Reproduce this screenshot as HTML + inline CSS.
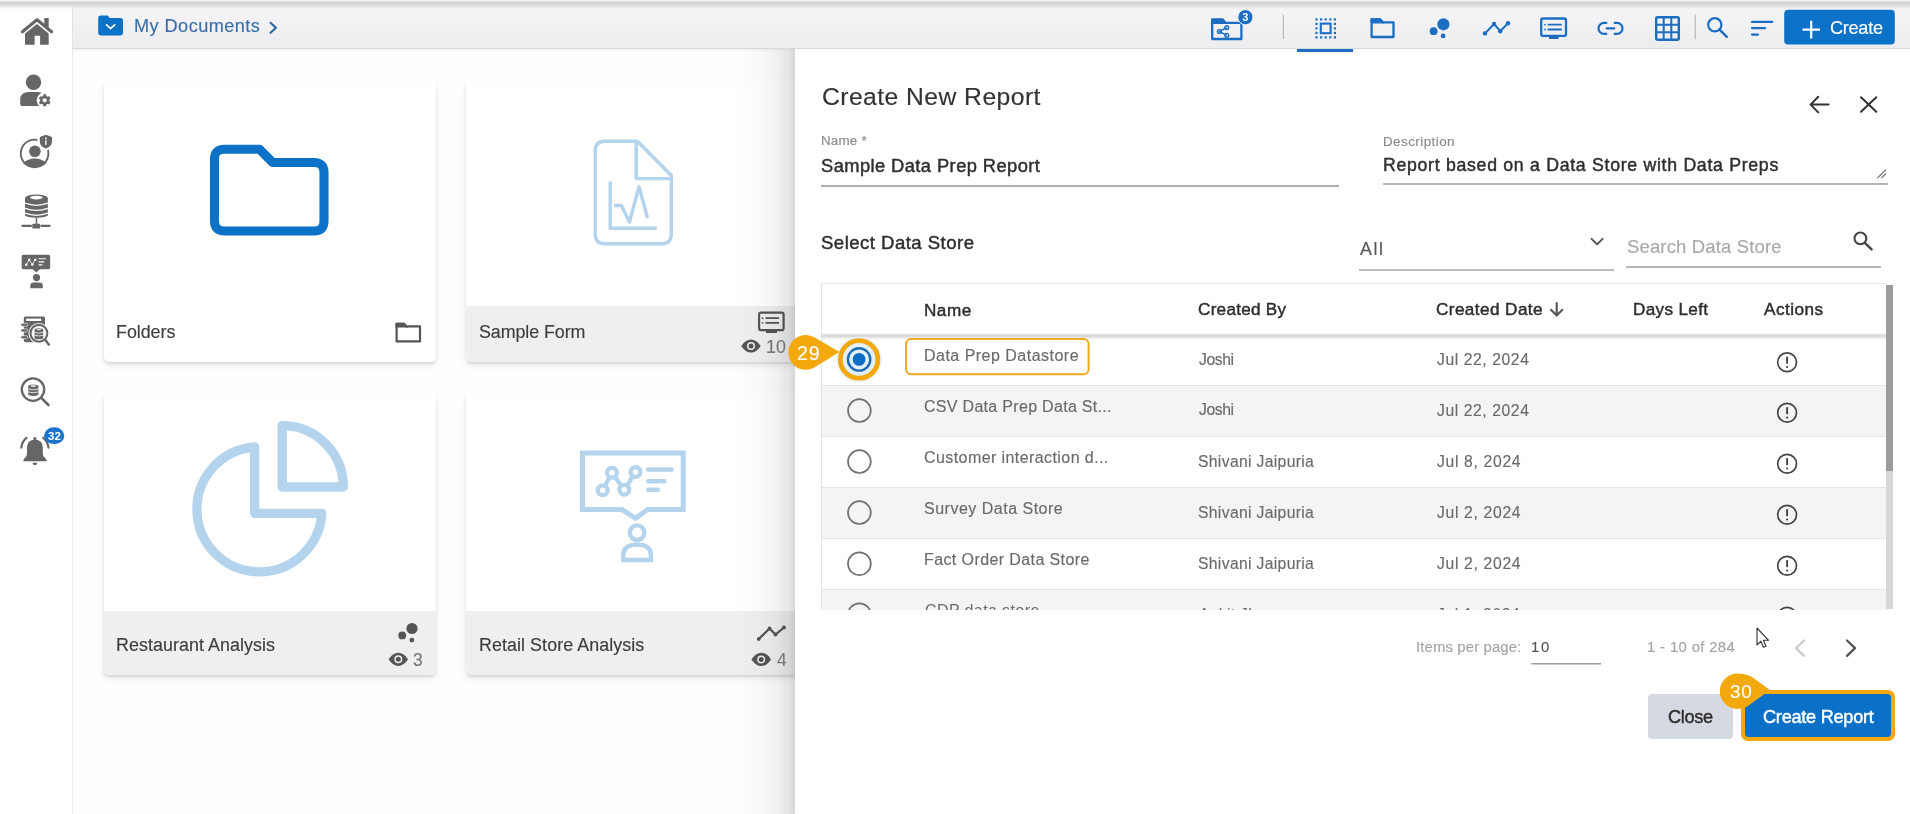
<!DOCTYPE html>
<html><head><meta charset="utf-8"><style>
html,body{margin:0;padding:0;}
body{width:1910px;height:814px;overflow:hidden;position:relative;background:#fefefe;font-family:"Liberation Sans",sans-serif;}
.a{position:absolute;}
.t{position:absolute;white-space:nowrap;line-height:1;font-family:"Liberation Sans",sans-serif;will-change:transform;}
svg{position:absolute;left:0;top:0;overflow:visible;}
.card{position:absolute;background:#fff;border-radius:5px;box-shadow:0 2px 3px rgba(0,0,0,0.11),0 4px 9px rgba(0,0,0,0.07);overflow:hidden;}
.foot{position:absolute;left:0;right:0;bottom:0;background:#efeff1;}
</style></head><body>
<!-- sidebar -->
<div class="a" style="left:0;top:0;width:72px;height:814px;background:#fff;border-right:1px solid #e9e9ea;"></div>
<!-- header -->
<div class="a" style="left:73px;top:0;width:1837px;height:48px;background:linear-gradient(#f4f4f6 25%,#ededef 100%);border-bottom:1px solid #d9d9db;box-shadow:0 1px 3px rgba(0,0,0,0.07);"></div>
<div class="a" style="left:0;top:0;width:1910px;height:9px;background:linear-gradient(#fdfdfd 0px,#cdcdcf 2.8px,#dcdcde 5px,rgba(243,243,245,0) 9px);"></div>
<!-- cards -->
<div class="card" style="left:104px;top:81px;width:332px;height:281px;"></div>
<div class="card" style="left:466px;top:81px;width:332px;height:281px;"><div class="foot" style="height:56px;"></div></div>
<div class="card" style="left:104px;top:393px;width:332px;height:282px;"><div class="foot" style="height:64px;"></div></div>
<div class="card" style="left:466px;top:393px;width:332px;height:282px;"><div class="foot" style="height:64px;"></div></div>
<!-- left svg -->
<svg width="1910" height="814" viewBox="0 0 1910 814">
 <g fill="#666" stroke="none">
  <!-- home -->
  <polyline points="22.4,31.8 37,19.8 51.6,31.8" fill="none" stroke="#666" stroke-width="3.2" stroke-linecap="round" stroke-linejoin="round"/>
  <rect x="44.3" y="18" width="4.4" height="9"/>
  <polygon points="25,33.6 37,23.9 48.7,33.6 48.7,44.7 40.1,44.7 40.1,35.8 34.6,35.8 34.6,44.7 25,44.7"/>
  <!-- user gear -->
  <circle cx="33.5" cy="82.2" r="7.7"/>
  <path d="M20.2 104 L20.2 100 Q20.2 92 29 92 L37 92 Q40 92 42 93 L42 106 L22.2 106 Q20.2 106 20.2 104Z"/>
  <circle cx="44.7" cy="100.3" r="8" fill="#fff"/>
  <g transform="translate(44.7 100.3)">
   <circle r="4.6"/>
   <rect x="-1.5" y="-6" width="3" height="12" rx="0.6"/>
   <rect x="-1.5" y="-6" width="3" height="12" rx="0.6" transform="rotate(60)"/>
   <rect x="-1.5" y="-6" width="3" height="12" rx="0.6" transform="rotate(120)"/>
   <circle r="2.1" fill="#fff"/>
  </g>
  <!-- user circle shield -->
  <circle cx="34.6" cy="153.4" r="13.8" fill="none" stroke="#666" stroke-width="1.9"/>
  <circle cx="34.9" cy="151.3" r="5.8"/>
  <path d="M23.2 163.2 Q28 158.6 34.9 158.6 Q41.8 158.6 46.4 163.2 Q42 167.2 34.9 167.2 Q27.6 167.2 23.2 163.2Z"/>
  <path d="M45.9 132.2 L54.3 135.3 L54.3 141 Q54.3 148 45.9 150.8 Q37.5 148 37.5 141 L37.5 135.3Z" fill="#fff"/>
  <path d="M45.9 134.7 L52 137 L52 141 Q52 146.5 45.9 148.5 Q39.8 146.5 39.8 141 L39.8 137Z"/>
  <circle cx="45.9" cy="138.4" r="0.95" fill="#fff"/>
  <rect x="45.2" y="140.3" width="1.4" height="4.6" fill="#fff"/>
  <!-- database network -->
  <rect x="25" y="198" width="22.8" height="17.5"/>
  <ellipse cx="36.4" cy="198" rx="11.4" ry="3.6"/>
  <ellipse cx="36.4" cy="215" rx="11.4" ry="2.8"/>
  <ellipse cx="36.4" cy="197.6" rx="6.3" ry="1.8" fill="#fff"/>
  <path d="M25 203.2 Q36.4 207.4 47.8 203.2 M25 208.3 Q36.4 212.5 47.8 208.3 M25 213.2 Q36.4 217.4 47.8 213.2" fill="none" stroke="#fff" stroke-width="1.3"/>
  <rect x="35.7" y="217.6" width="1.5" height="6.5"/>
  <rect x="32.3" y="223.8" width="7.9" height="4.7" rx="0.8"/>
  <line x1="22.4" y1="225.9" x2="31" y2="225.9" stroke="#666" stroke-width="2.2" stroke-linecap="round"/>
  <line x1="41.5" y1="225.9" x2="49.6" y2="225.9" stroke="#666" stroke-width="2.2" stroke-linecap="round"/>
  <!-- board person -->
  <rect x="21.7" y="254.8" width="28.5" height="14.4" rx="1.6"/>
  <polygon points="32.6,269 36.3,272.4 40,269"/>
  <g fill="#fff" stroke="none">
   <circle cx="26.3" cy="264.8" r="1.2"/><circle cx="29.2" cy="259.8" r="1.2"/><circle cx="32.3" cy="264.5" r="1.2"/><circle cx="35.3" cy="259.7" r="1.2"/>
  </g>
  <polyline points="26.3,264.8 29.2,259.8 32.3,264.5 35.3,259.7" fill="none" stroke="#fff" stroke-width="0.8"/>
  <path d="M38.6 258.8 H46 M38.6 261.9 H44.2 M38.6 264.9 H42.4" stroke="#fff" stroke-width="1.1" fill="none"/>
  <circle cx="36.5" cy="277.6" r="3.6"/>
  <path d="M30.3 288.2 L30.3 285.5 Q30.3 282.4 34 282.4 L39.2 282.4 Q42.8 282.4 42.8 285.5 L42.8 288.2Z"/>
  <!-- notebook magnifier -->
  <rect x="23.8" y="316.4" width="21.2" height="25.8" rx="1.6"/>
  <rect x="26.2" y="318.6" width="15" height="2.4" fill="#fff"/>
  <g fill="#666" stroke="#fff" stroke-width="0.6">
   <rect x="20.8" y="323.3" width="7" height="3" rx="1.5"/>
   <rect x="20.8" y="328.9" width="7" height="3" rx="1.5"/>
   <rect x="20.8" y="335.7" width="7" height="3" rx="1.5"/>
  </g>
  <circle cx="38.9" cy="333.3" r="10.4" fill="#fff"/>
  <line x1="45" y1="339.6" x2="48.7" y2="344.6" stroke="#fff" stroke-width="4.6" stroke-linecap="round"/>
  <circle cx="38.9" cy="333.3" r="8.4" fill="#fff" stroke="#666" stroke-width="2.1"/>
  <line x1="45" y1="339.6" x2="48.7" y2="344.6" stroke="#666" stroke-width="2.5" stroke-linecap="round"/>
  <rect x="34.6" y="329.8" width="8.6" height="8.2"/>
  <ellipse cx="38.9" cy="329.8" rx="4.3" ry="1.5"/>
  <ellipse cx="38.9" cy="338" rx="4.3" ry="1.3"/>
  <path d="M34.6 332.4 Q38.9 334 43.2 332.4 M34.6 335.2 Q38.9 336.8 43.2 335.2" fill="none" stroke="#fff" stroke-width="0.8"/>
  <ellipse cx="38.9" cy="329.6" rx="2.3" ry="0.7" fill="#fff"/>
  <!-- magnifier db -->
  <circle cx="33" cy="389.6" r="11.2" fill="none" stroke="#666" stroke-width="2.3"/>
  <line x1="41.3" y1="397.9" x2="48.4" y2="405" stroke="#666" stroke-width="2.6" stroke-linecap="round"/>
  <rect x="28.2" y="386.2" width="10.2" height="8.4"/>
  <ellipse cx="33.3" cy="386.2" rx="5.1" ry="1.6"/>
  <ellipse cx="33.3" cy="394.6" rx="5.1" ry="1.4"/>
  <path d="M28.2 389 Q33.3 390.7 38.4 389 M28.2 391.9 Q33.3 393.6 38.4 391.9" fill="none" stroke="#fff" stroke-width="0.8"/>
  <ellipse cx="33.3" cy="386" rx="3" ry="0.8" fill="#fff"/>
  <!-- bell -->
  <circle cx="34.9" cy="438.6" r="1.6"/>
  <path d="M23.2 461.3 Q23.2 459 26.2 456.5 Q27 455.5 27 453 L27 447.5 Q27 440 34.9 439.5 Q42.8 440 42.8 447.5 L42.8 453 Q42.8 455.5 43.7 456.5 Q46.8 459 46.8 461.3Z"/>
  <path d="M32.5 462.8 A2.4 2.4 0 0 0 37.3 462.8Z"/>
  <path d="M26.5 437.8 Q22 441.5 21.3 447.6" fill="none" stroke="#666" stroke-width="2.2" stroke-linecap="round"/>
  <path d="M43.3 437.8 Q47.8 441.5 48.5 447.6" fill="none" stroke="#666" stroke-width="2.2" stroke-linecap="round"/>
  <ellipse cx="54.2" cy="435.7" rx="10.1" ry="8.4" fill="#1a74c9"/>
 </g>
 <!-- card icons -->
 <path d="M214.5 159 Q214.5 149.2 224.3 149.2 L259.5 149.2 L272.7 162.5 L314 162.5 Q324 162.5 324 172.5 L324 221 Q324 231 314 231 L224.5 231 Q214.5 231 214.5 221 Z" fill="none" stroke="#0b72c8" stroke-width="9.1" stroke-linejoin="round"/>
 <g fill="none" stroke="#b4d3ec" stroke-width="3.4" stroke-linejoin="round">
  <path d="M605 141.2 L637.5 141.2 L671.3 175.5 L671.3 234 Q671.3 243.8 661.5 243.8 L605 243.8 Q595.2 243.8 595.2 234 L595.2 151 Q595.2 141.2 605 141.2 Z"/>
  <path d="M636.2 141.2 L636.2 178.6 L671.3 178.6"/>
  <polyline points="610.2,181.5 610.2,228.2 656.8,228.2"/>
  <polyline points="614,205.5 621.4,205.5 629.5,222 639,186.5 647.5,218"/>
 </g>
 <g fill="none" stroke="#b4d3ec" stroke-width="9.3" stroke-linejoin="round">
  <path d="M254.7 447 L254.7 513.4 L321.8 513.4 A62.5 62.5 0 1 1 254.7 447 Z"/>
  <path d="M282.2 425.6 L282.2 487 L343.3 487 A61.2 61.2 0 0 0 282.2 425.6 Z"/>
 </g>
 <g fill="none" stroke="#b4d3ec" stroke-width="5" stroke-linejoin="miter">
  <path d="M582.5 453 L683.2 453 L683.2 509.6 L647.5 509.6 L635.5 518.3 L622 509.6 L582.5 509.6 Z"/>
  <polyline points="602.7,490.3 611.9,472.7 624.3,489.8 635.5,472" stroke-width="4.3"/>
  <g fill="#fff" stroke-width="4.3">
   <circle cx="611.9" cy="472.7" r="4.9"/><circle cx="602.7" cy="490.3" r="4.9"/><circle cx="624.3" cy="489.8" r="4.9"/><circle cx="635.5" cy="472" r="4.9"/>
  </g>
  <path d="M648.2 469.6 H671.6 M648.2 481.2 H664.3 M648.2 489.8 H657.8" stroke-width="4.5" stroke-linecap="round"/>
  <circle cx="637.1" cy="532.7" r="7.3" stroke-width="4.4"/>
  <path d="M623.3 560 L623.3 555 Q623.3 544.6 637.1 544.6 Q650.9 544.6 650.9 555 L650.9 560 Z" stroke-width="4.4"/>
 </g>
 <!-- card footer icons -->
 <g fill="none" stroke="#555" stroke-width="2.2">
  <path d="M396.6 341.4 L396.6 323.8 L404 323.8 L406.2 326.4 L420 326.4 L420 341.4 Z" stroke-linejoin="round"/>
  <path d="M396.6 323.8 L404 323.8 L406.2 326.4 L396.6 326.4Z" fill="#555"/>
  <rect x="759.1" y="312.7" width="24.5" height="17.5" rx="2"/>
  <path d="M765.5 318.2 H779 M765.5 322.8 H779" stroke-width="1.8"/>
  <polyline points="758.8,639 769.5,628.5 775.5,634.5 784,627.5" stroke-width="2.2"/>
 </g>
 <g fill="#555">
  <rect x="766" y="330.2" width="11" height="2.8"/>
  <circle cx="762.6" cy="318.2" r="0.9"/><circle cx="762.6" cy="322.8" r="0.9"/>
  <circle cx="758.8" cy="639" r="1.9"/><circle cx="769.5" cy="628.5" r="1.9"/><circle cx="775.5" cy="634.5" r="1.9"/><circle cx="784" cy="627.5" r="1.9"/>
  <circle cx="412" cy="628.5" r="5.6"/><circle cx="402.2" cy="635.4" r="3.9"/><circle cx="411.9" cy="640.1" r="2.4"/>
 </g>
 <g id="eye" fill="#555">
  <path d="M741.2 346 Q745.5 339.4 751 339.4 Q756.5 339.4 760.8 346 Q756.5 352.6 751 352.6 Q745.5 352.6 741.2 346Z"/>
  <circle cx="751" cy="346" r="4" fill="#efeff1"/>
  <circle cx="751" cy="346" r="2.5"/>
 </g>
 <use href="#eye" transform="translate(-352.7 313.3)"/>
 <use href="#eye" transform="translate(10.2 313.4)"/>
</svg>
<!-- panel -->
<div class="a" style="left:735px;top:49px;width:60px;height:765px;background:linear-gradient(to right,rgba(0,0,0,0) 0px,rgba(0,0,0,0.02) 25px,rgba(0,0,0,0.05) 42px,rgba(0,0,0,0.10) 54px,rgba(0,0,0,0.16) 60px);"></div>
<div class="a" style="left:795px;top:49px;width:1115px;height:765px;background:#fff;"></div>
<!-- panel inputs underline -->
<div class="a" style="left:821px;top:185px;width:518px;height:1.6px;background:#aeaeae;"></div>
<div class="a" style="left:1383px;top:183px;width:505px;height:1.6px;background:#b3b6bd;"></div>
<div class="a" style="left:1359px;top:269px;width:255px;height:1.6px;background:#b9bcc2;"></div>
<div class="a" style="left:1626px;top:266px;width:255px;height:1.6px;background:#b6b6b6;"></div>
<!-- table -->
<div class="a" style="left:821px;top:283px;width:1065px;height:326px;overflow:hidden;border-left:1px solid #e3e3e3;border-top:1px solid #ececec;background:#fff;">
 <div class="a" style="left:0;top:51px;width:1065px;height:51px;background:#fff;border-bottom:1px solid #e5e5e6;box-sizing:border-box;"></div>
 <div class="a" style="left:0;top:102px;width:1065px;height:51px;background:#f4f4f6;border-bottom:1px solid #e5e5e6;box-sizing:border-box;"></div>
 <div class="a" style="left:0;top:153px;width:1065px;height:51px;background:#fff;border-bottom:1px solid #e5e5e6;box-sizing:border-box;"></div>
 <div class="a" style="left:0;top:204px;width:1065px;height:51px;background:#f4f4f6;border-bottom:1px solid #e5e5e6;box-sizing:border-box;"></div>
 <div class="a" style="left:0;top:255px;width:1065px;height:51px;background:#fff;border-bottom:1px solid #e5e5e6;box-sizing:border-box;"></div>
 <div class="a" style="left:0;top:306px;width:1065px;height:51px;background:#f4f4f6;"></div>
 <div class="t" style="left:103px;top:319px;font-size:16px;letter-spacing:0.4px;color:#6a6a6a;">CDP data store</div>
 <div class="t" style="left:377px;top:323px;font-size:15.7px;letter-spacing:0.3px;color:#6a6a6a;">Ankit Jha</div>
 <div class="t" style="left:615px;top:323px;font-size:15.7px;letter-spacing:0.6px;color:#6a6a6a;">Jul 1, 2024</div>
 <svg width="1065" height="400" viewBox="822 284 1065 400" style="position:absolute;left:0;top:0;"><circle cx="859.4" cy="614.7" r="11.4" fill="none" stroke="#707070" stroke-width="1.7"/><circle cx="1787.1" cy="616.7" r="9.4" fill="none" stroke="#444" stroke-width="1.7"/></svg>
 <div class="a" style="left:0;top:0;width:1065px;height:50px;background:#fff;"></div>
 <div class="a" style="left:0;top:48.5px;width:1065px;height:7px;background:linear-gradient(rgba(0,0,0,0) 0px,rgba(0,0,0,0.10) 1.5px,rgba(0,0,0,0.165) 3px,rgba(0,0,0,0.09) 4.5px,rgba(0,0,0,0) 7px);"></div>
</div>
<div class="a" style="left:1886px;top:285px;width:7px;height:324px;background:#d6d6d6;"></div>
<div class="a" style="left:1886px;top:285px;width:7px;height:186px;background:#9c9c9c;"></div>
<!-- buttons -->
<div class="a" style="left:1648px;top:694px;width:85px;height:45px;background:#d5d9e2;border-radius:4px;"></div>
<div class="a" style="left:1741px;top:690px;width:154px;height:51px;background:#f3a90c;border-radius:7px;"></div>
<div class="a" style="left:1745px;top:694px;width:146px;height:42.5px;background:#0b70c8;border-radius:4px;"></div>
<!-- top svg -->
<svg width="1910" height="814" viewBox="0 0 1910 814">
 <!-- header breadcrumb -->
 <path d="M98.2 18 Q98.2 15.5 100.7 15.5 L107.5 15.5 L110 18 L120.5 18 Q123 18 123 20.5 L123 33 Q123 35.4 120.5 35.4 L100.7 35.4 Q98.2 35.4 98.2 33Z" fill="#0b72c8"/>
 <polyline points="106.5,24.8 110.6,28.6 114.7,24.8" fill="none" stroke="#fff" stroke-width="1.6" stroke-linecap="round" stroke-linejoin="round"/>
 <polyline points="270.5,22.8 276,27.8 270.5,32.8" fill="none" stroke="#2f66a8" stroke-width="2.1" stroke-linecap="round" stroke-linejoin="round"/>
 <g fill="none" stroke="#1b6ec2" stroke-width="2.3" stroke-linejoin="round">
  <path d="M1212.2 39 L1212.2 19.6 L1222.6 19.6 L1225.4 22.9 L1241.4 22.9 L1241.4 39 Z"/>
  <path d="M1212.2 19.6 L1222.6 19.6 L1225.4 22.9 L1212.2 22.9Z" fill="#1b6ec2"/>
  <path d="M1226.8 27.6 L1219.3 31.5 L1226.8 35.3" stroke-width="1.5"/>
  <circle cx="1219.3" cy="31.5" r="1.9" stroke-width="1.4"/>
  <circle cx="1226.8" cy="27.6" r="1.9" stroke-width="1.4"/>
  <circle cx="1226.8" cy="35.3" r="1.9" stroke-width="1.4"/>
 </g>
 <circle cx="1245.4" cy="17.2" r="7.6" fill="#1b6ec2" stroke="#f3f3f5" stroke-width="1"/>
 <text x="1245.4" y="21.2" text-anchor="middle" font-family="Liberation Sans" font-weight="bold" font-size="11" fill="#fff">3</text>
 <line x1="1283.4" y1="14.5" x2="1283.4" y2="39" stroke="#b9b9bb" stroke-width="1.2"/>
 <g fill="#1b6ec2">
  <rect x="1315.4" y="18.3" width="2.2" height="2.2"/><rect x="1320" y="18.3" width="2.2" height="2.2"/><rect x="1324.6" y="18.3" width="2.2" height="2.2"/><rect x="1329.2" y="18.3" width="2.2" height="2.2"/><rect x="1333.8" y="18.3" width="2.2" height="2.2"/>
  <rect x="1315.4" y="36.3" width="2.2" height="2.2"/><rect x="1320" y="36.3" width="2.2" height="2.2"/><rect x="1324.6" y="36.3" width="2.2" height="2.2"/><rect x="1329.2" y="36.3" width="2.2" height="2.2"/><rect x="1333.8" y="36.3" width="2.2" height="2.2"/>
  <rect x="1315.4" y="22.8" width="2.2" height="2.2"/><rect x="1315.4" y="27.3" width="2.2" height="2.2"/><rect x="1315.4" y="31.8" width="2.2" height="2.2"/>
  <rect x="1333.8" y="22.8" width="2.2" height="2.2"/><rect x="1333.8" y="27.3" width="2.2" height="2.2"/><rect x="1333.8" y="31.8" width="2.2" height="2.2"/>
  <rect x="1297" y="49" width="56" height="3"/>
 </g>
 <rect x="1320.8" y="23.6" width="9.8" height="9.6" fill="none" stroke="#1b6ec2" stroke-width="2.1"/>
 <g fill="none" stroke="#1b6ec2" stroke-width="2.3" stroke-linejoin="round">
  <path d="M1371.6 37 L1371.6 19.4 L1380.2 19.4 L1382.8 22.3 L1393.5 22.3 L1393.5 37 Z"/>
  <path d="M1371.6 19.4 L1380.2 19.4 L1382.8 22.3 L1371.6 22.3Z" fill="#1b6ec2"/>
  <polyline points="1485,33.4 1494.1,24 1500.2,31.2 1508,23.3" stroke-width="2"/>
  <rect x="1541.2" y="18.5" width="24.8" height="17.4" rx="2"/>
  <path d="M1547.6 24.6 H1561.8 M1547.6 29.5 H1561.8" stroke-width="1.9"/>
  <path d="M1607.2 22.8 L1604 22.8 A5.5 5.5 0 0 0 1604 33.8 L1607.2 33.8 M1613.8 22.8 L1617 22.8 A5.5 5.5 0 0 1 1617 33.8 L1613.8 33.8 M1605.8 28.3 H1615.2" stroke-width="2.2"/>
  <rect x="1656.2" y="17.2" width="22.6" height="22.6" rx="1.5" stroke-width="2.4"/>
  <path d="M1663.7 17.2 V39.8 M1671.3 17.2 V39.8 M1656.2 24.7 H1678.8 M1656.2 32.3 H1678.8" stroke-width="2"/>
  <circle cx="1714.8" cy="24.8" r="6.6" stroke-width="2.2"/>
  <line x1="1719.6" y1="29.6" x2="1726.8" y2="36.8" stroke-width="2.4" stroke-linecap="round"/>
  <path d="M1752 21.9 H1772.2 M1752 28.2 H1765 M1752 34.6 H1758" stroke-width="2.2" stroke-linecap="round"/>
 </g>
 <g fill="#1b6ec2">
  <circle cx="1443.4" cy="24.3" r="6.1"/><circle cx="1433.6" cy="31.2" r="3.9"/><circle cx="1443.1" cy="35.9" r="2.4"/>
  <circle cx="1485" cy="33.4" r="2.2"/><circle cx="1494.1" cy="24" r="2.2"/><circle cx="1500.2" cy="31.2" r="2.2"/><circle cx="1508" cy="23.3" r="2.2"/>
  <rect x="1549" y="36.4" width="9.6" height="2.6"/>
  <circle cx="1545" cy="24.6" r="0.9"/><circle cx="1545" cy="29.5" r="0.9"/>
 </g>
 <line x1="1695.3" y1="14.4" x2="1695.3" y2="39.2" stroke="#b9b9bb" stroke-width="1.2"/>
 <rect x="1784.2" y="9.8" width="110.6" height="34.6" rx="4" fill="#0b72c8"/>
 <path d="M1802.5 29.6 H1820 M1811.2 20.8 V38.4" stroke="#fff" stroke-width="2.2"/>
 <!-- panel icons -->
 <g fill="none" stroke="#333" stroke-width="2" stroke-linecap="round" stroke-linejoin="round">
  <path d="M1810.6 104.6 H1828.6 M1818.2 96.8 L1810.6 104.6 L1818.2 112.4"/>
  <path d="M1861 97.2 L1876.3 111.8 M1876.3 97.2 L1861 111.8"/>
 </g>
 <path d="M1877.5 178 L1886 169.5 M1881.5 178 L1886 173.5" stroke="#777" stroke-width="1.1"/>
 <polyline points="1591.6,238.9 1597.1,244.4 1602.6,238.9" fill="none" stroke="#555" stroke-width="2" stroke-linecap="round" stroke-linejoin="round"/>
 <circle cx="1860.4" cy="238.4" r="5.9" fill="none" stroke="#444" stroke-width="2.1"/>
 <line x1="1864.8" y1="242.8" x2="1871.6" y2="249.4" stroke="#444" stroke-width="2.4" stroke-linecap="round"/>
 <!-- sort arrow -->
 <path d="M1556.7 303 V315 M1551 309.8 L1556.7 315.5 L1562.4 309.8" fill="none" stroke="#555" stroke-width="2.1" stroke-linecap="round" stroke-linejoin="round"/>
 <!-- radios -->
 <g fill="none" stroke="#707070" stroke-width="1.7">
  <circle cx="859.4" cy="410.6" r="11.4"/>
  <circle cx="859.4" cy="461.6" r="11.4"/>
  <circle cx="859.4" cy="512.6" r="11.4"/>
  <circle cx="859.4" cy="563.7" r="11.4"/>
 </g>
 <circle cx="859.1" cy="359.4" r="23" fill="#e4eef8" opacity="0.7"/>
 <circle cx="859.1" cy="359.4" r="18.8" fill="#e2f0fc" stroke="#f3a90c" stroke-width="4.8"/>
 <circle cx="859.1" cy="359.4" r="11.2" fill="none" stroke="#1f6cb3" stroke-width="2.4"/>
 <circle cx="859.1" cy="359.4" r="6.4" fill="#0f6fc6"/>
 <rect x="906.1" y="339.1" width="182.5" height="35.2" rx="5" fill="none" stroke="#eda91d" stroke-width="2"/>
 <!-- action icons -->
 <g id="info">
  <circle cx="1787.1" cy="362.2" r="9.4" fill="none" stroke="#444" stroke-width="1.7"/>
  <line x1="1787.1" y1="356.6" x2="1787.1" y2="363.6" stroke="#444" stroke-width="1.9"/>
  <circle cx="1787.1" cy="367" r="1.1" fill="#444"/>
 </g>
 <use href="#info" y="50.6"/><use href="#info" y="101.5"/><use href="#info" y="152.5"/><use href="#info" y="203.5"/>
 <!-- callout 29 -->
 <path d="M814.8 337.5 L839.4 352.1 L814.8 367.3 A17.4 17.4 0 1 1 814.8 337.5 Z" fill="#f3a90c"/>
 <!-- pagination -->

 <polyline points="1804,640.5 1796,648.2 1804,655.9" fill="none" stroke="#c9c9c9" stroke-width="2.2" stroke-linecap="round" stroke-linejoin="round"/>
 <polyline points="1847,640.5 1855,648.2 1847,655.9" fill="none" stroke="#555" stroke-width="2.3" stroke-linecap="round" stroke-linejoin="round"/>
 <rect x="1531.3" y="663" width="69.7" height="1.5" fill="#9d9d9d"/>
 <path d="M1757 628 L1757 645 L1760.8 641.2 L1763.5 647.3 L1766 646.2 L1763.3 640.3 L1768.6 640.3 Z" fill="#fff" stroke="#333" stroke-width="1.1" stroke-linejoin="round"/>
 <!-- callout 30 -->
 <path d="M1737.5 673.5 Q1746 673.5 1752 677 L1770 690 L1752 703 Q1745.5 708.9 1737.5 708.9 A17.7 17.7 0 1 1 1737.5 673.5 Z" fill="#f3a90c"/>
 <!-- badge 32 -->
 <text x="54.4" y="439.8" text-anchor="middle" font-family="Liberation Sans" font-weight="bold" font-size="11.5" fill="#fff">32</text>
</svg>
<div class="t" style="left:134px;top:17.4px;font-size:18.14px;letter-spacing:0.455px;color:#3b6ea8;-webkit-text-stroke:0.15px #3b6ea8;">My Documents</div>
<div class="t" style="left:1830px;top:19px;font-size:18.14px;letter-spacing:-0.28px;color:#ffffff;-webkit-text-stroke:0.15px #ffffff;">Create</div>
<div class="t" style="left:821.6px;top:85px;font-size:24.71px;letter-spacing:0.438px;color:#333333;-webkit-text-stroke:0.15px #333333;">Create New Report</div>
<div class="t" style="left:820.8px;top:134.3px;font-size:13.4px;letter-spacing:0.2px;color:#8a8a8a;-webkit-text-stroke:0.15px #8a8a8a;">Name *</div>
<div class="t" style="left:820.8px;top:157.1px;font-size:18.29px;letter-spacing:0.436px;color:#2e2e2e;-webkit-text-stroke:0.45px #2e2e2e;">Sample Data Prep Report</div>
<div class="t" style="left:1382.8px;top:134.5px;font-size:13.4px;letter-spacing:0.45px;color:#8a8a8a;-webkit-text-stroke:0.15px #8a8a8a;">Description</div>
<div class="t" style="left:1382.8px;top:157px;font-size:17.71px;letter-spacing:0.709px;color:#2e2e2e;-webkit-text-stroke:0.45px #2e2e2e;">Report based on a Data Store with Data Preps</div>
<div class="t" style="left:821.4px;top:233.5px;font-size:18.57px;letter-spacing:0.469px;color:#2e2e2e;-webkit-text-stroke:0.45px #2e2e2e;">Select Data Store</div>
<div class="t" style="left:1359.8px;top:240.5px;font-size:17.86px;letter-spacing:1.5px;color:#555555;-webkit-text-stroke:0.15px #555555;">All</div>
<div class="t" style="left:1626.5px;top:238.4px;font-size:18.43px;letter-spacing:0.188px;color:#a9a9a9;-webkit-text-stroke:0.15px #a9a9a9;">Search Data Store</div>
<div class="t" style="left:923.6px;top:301.5px;font-size:17.14px;letter-spacing:0.5px;color:#2e2e2e;-webkit-text-stroke:0.45px #2e2e2e;">Name</div>
<div class="t" style="left:1197.7px;top:301.4px;font-size:17.14px;letter-spacing:0.267px;color:#2e2e2e;-webkit-text-stroke:0.45px #2e2e2e;">Created By</div>
<div class="t" style="left:1435.7px;top:301.4px;font-size:17.14px;letter-spacing:0.427px;color:#2e2e2e;-webkit-text-stroke:0.45px #2e2e2e;">Created Date</div>
<div class="t" style="left:1633.2px;top:301.4px;font-size:17.14px;letter-spacing:0.338px;color:#2e2e2e;-webkit-text-stroke:0.45px #2e2e2e;">Days Left</div>
<div class="t" style="left:1763.5px;top:301.4px;font-size:17.14px;letter-spacing:0.5px;color:#2e2e2e;-webkit-text-stroke:0.45px #2e2e2e;">Actions</div>
<div class="t" style="left:924.4px;top:347.8px;font-size:16.0px;letter-spacing:0.483px;color:#6a6a6a;-webkit-text-stroke:0.15px #6a6a6a;">Data Prep Datastore</div>
<div class="t" style="left:924.4px;top:398.6px;font-size:16.0px;letter-spacing:0.304px;color:#6a6a6a;-webkit-text-stroke:0.15px #6a6a6a;">CSV Data Prep Data St...</div>
<div class="t" style="left:924.4px;top:449.5px;font-size:16.0px;letter-spacing:0.417px;color:#6a6a6a;-webkit-text-stroke:0.15px #6a6a6a;">Customer interaction d...</div>
<div class="t" style="left:924.4px;top:500.7px;font-size:16.0px;letter-spacing:0.5px;color:#6a6a6a;-webkit-text-stroke:0.15px #6a6a6a;">Survey Data Store</div>
<div class="t" style="left:924.4px;top:551.6px;font-size:16.0px;letter-spacing:0.4px;color:#6a6a6a;-webkit-text-stroke:0.15px #6a6a6a;">Fact Order Data Store</div>
<div class="t" style="left:1198.7px;top:351.5px;font-size:15.71px;letter-spacing:-0.425px;color:#6a6a6a;-webkit-text-stroke:0.15px #6a6a6a;">Joshi</div>
<div class="t" style="left:1198.7px;top:402.3px;font-size:15.71px;letter-spacing:-0.425px;color:#6a6a6a;-webkit-text-stroke:0.15px #6a6a6a;">Joshi</div>
<div class="t" style="left:1197.7px;top:453.9px;font-size:15.71px;letter-spacing:0.333px;color:#6a6a6a;-webkit-text-stroke:0.15px #6a6a6a;">Shivani Jaipuria</div>
<div class="t" style="left:1197.7px;top:504.8px;font-size:15.71px;letter-spacing:0.333px;color:#6a6a6a;-webkit-text-stroke:0.15px #6a6a6a;">Shivani Jaipuria</div>
<div class="t" style="left:1197.7px;top:555.8px;font-size:15.71px;letter-spacing:0.333px;color:#6a6a6a;-webkit-text-stroke:0.15px #6a6a6a;">Shivani Jaipuria</div>
<div class="t" style="left:1436.7px;top:351.9px;font-size:15.71px;letter-spacing:0.573px;color:#6a6a6a;-webkit-text-stroke:0.15px #6a6a6a;">Jul 22, 2024</div>
<div class="t" style="left:1436.7px;top:402.7px;font-size:15.71px;letter-spacing:0.573px;color:#6a6a6a;-webkit-text-stroke:0.15px #6a6a6a;">Jul 22, 2024</div>
<div class="t" style="left:1436.7px;top:453.9px;font-size:15.71px;letter-spacing:0.67px;color:#6a6a6a;-webkit-text-stroke:0.15px #6a6a6a;">Jul 8, 2024</div>
<div class="t" style="left:1436.7px;top:504.8px;font-size:15.71px;letter-spacing:0.67px;color:#6a6a6a;-webkit-text-stroke:0.15px #6a6a6a;">Jul 2, 2024</div>
<div class="t" style="left:1436.7px;top:555.8px;font-size:15.71px;letter-spacing:0.67px;color:#6a6a6a;-webkit-text-stroke:0.15px #6a6a6a;">Jul 2, 2024</div>
<div class="t" style="left:1416.3px;top:639.7px;font-size:14.86px;letter-spacing:0.143px;color:#a3a3a3;-webkit-text-stroke:0.15px #a3a3a3;">Items per page:</div>
<div class="t" style="left:1530.9px;top:639.7px;font-size:14.86px;letter-spacing:1.7px;color:#555555;-webkit-text-stroke:0.15px #555555;">10</div>
<div class="t" style="left:1646.7px;top:639.6px;font-size:14.86px;letter-spacing:0.358px;color:#a3a3a3;-webkit-text-stroke:0.15px #a3a3a3;">1 - 10 of 284</div>
<div class="t" style="left:1668px;top:707.6px;font-size:18.14px;letter-spacing:-0.3px;color:#2e2e2e;-webkit-text-stroke:0.45px #2e2e2e;">Close</div>
<div class="t" style="left:1763.1px;top:707.6px;font-size:18.14px;letter-spacing:-0.25px;color:#ffffff;-webkit-text-stroke:0.45px #ffffff;">Create Report</div>
<div class="t" style="left:797px;top:343.8px;font-size:19.71px;letter-spacing:0.7px;color:#ffffff;-webkit-text-stroke:0.15px #ffffff;">29</div>
<div class="t" style="left:1729.5px;top:683.3px;font-size:18.86px;letter-spacing:0.8px;color:#ffffff;-webkit-text-stroke:0.15px #ffffff;">30</div>
<div class="t" style="left:115.9px;top:323.6px;font-size:17.86px;letter-spacing:-0.033px;color:#3d3d3d;-webkit-text-stroke:0.15px #3d3d3d;">Folders</div>
<div class="t" style="left:478.9px;top:323.7px;font-size:17.86px;letter-spacing:-0.07px;color:#3d3d3d;-webkit-text-stroke:0.15px #3d3d3d;">Sample Form</div>
<div class="t" style="left:115.9px;top:636.5px;font-size:17.86px;letter-spacing:0.056px;color:#3d3d3d;-webkit-text-stroke:0.15px #3d3d3d;">Restaurant Analysis</div>
<div class="t" style="left:478.9px;top:636.6px;font-size:17.86px;letter-spacing:0.07px;color:#3d3d3d;-webkit-text-stroke:0.15px #3d3d3d;">Retail Store Analysis</div>
<div class="t" style="left:766px;top:338.5px;font-size:17.86px;letter-spacing:0.0px;color:#777777;-webkit-text-stroke:0.15px #777777;">10</div>
<div class="t" style="left:412.8px;top:651.5px;font-size:17.43px;letter-spacing:0.6px;color:#777777;-webkit-text-stroke:0.15px #777777;">3</div>
<div class="t" style="left:776.7px;top:651.5px;font-size:17.43px;letter-spacing:-0.7px;color:#777777;-webkit-text-stroke:0.15px #777777;">4</div>
</body></html>
